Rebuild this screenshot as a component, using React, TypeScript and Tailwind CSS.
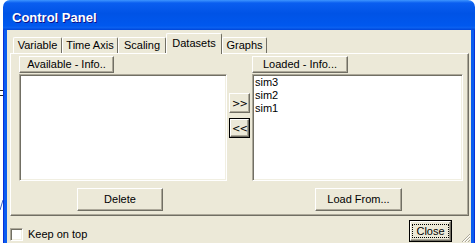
import clsx from "clsx";
import type { ReactNode } from "react";

const face = "bg-[#ece9d8]";
const raised =
  "border border-t-white border-l-white border-r-[#716f64] border-b-[#716f64] shadow-[inset_-1px_-1px_0_#aca899]";
const sunken =
  "border border-t-[#aca899] border-l-[#aca899] border-r-white border-b-white shadow-[inset_1px_1px_0_#716f64,inset_-1px_-1px_0_#f1efe2]";

const Btn = ({ children, className }: { children: ReactNode; className?: string }) => (
  <div className={clsx("flex items-center justify-center text-black", face, raised, className)}>
    {children}
  </div>
);

const tabs = [
  { name: "Variable", w: "w-[49px]" },
  { name: "Time Axis", w: "w-[56px]" },
  { name: "Scaling", w: "w-[48px]" },
  { name: "Datasets", w: "w-[56px]", active: true },
  { name: "Graphs", w: "w-[45px]" },
];

const loaded = ["sim3", "sim2", "sim1"];

const App = () => {
  return (
    <div className="w-[475px] h-[246px] bg-white flex overflow-hidden font-['Liberation_Sans',Arial,sans-serif] text-[11px] text-black">
      {/* bits of whatever is behind the window */}
      <svg width="3" height="246" className="shrink-0">
        <line x1="0" y1="90.5" x2="3" y2="90.5" stroke="#222" />
        <line x1="0" y1="95.5" x2="3" y2="95.5" stroke="#222" />
        <line x1="3" y1="200" x2="0" y2="210" stroke="#3a62c8" />
      </svg>

      <div className="w-[472px] h-[243px] flex flex-col rounded-t-[7px] overflow-hidden shrink-0">
        <div className="h-[30px] flex items-center pt-[5px] pl-[9px] bg-[linear-gradient(180deg,#3d95ff_0%,#0a5ef0_10%,#0053e6_45%,#0058ee_85%,#0a60f0_92%,#0045d8_100%)]">
          <span className="text-white font-bold text-[13px] [text-shadow:1px_1px_#0f1089]">Control Panel</span>
        </div>

        <div className="flex flex-1">
          <div className="w-px bg-[#0831d9]" />
          <div className="w-[3px] bg-[#0b5cef]" />

          <div className={clsx("relative flex-1 flex flex-col pl-[3px] pt-[3px]", face)}>
            {/* tab strip */}
            <div className="h-[20px] flex items-end pl-[3px]">
              {tabs.map((t) =>
                t.active ? (
                  <div
                    key={t.name}
                    className={clsx(
                      "h-[21px] -mb-px relative z-10 flex items-center justify-center pb-[2px] border-l border-t border-r border-l-white border-t-white border-r-[#716f64] rounded-t-[2px]",
                      face,
                      t.w
                    )}
                  >
                    {t.name}
                  </div>
                ) : (
                  <div
                    key={t.name}
                    className={clsx(
                      "h-[16px] flex items-center justify-center border-l border-t border-r border-l-white border-t-white border-r-[#716f64] rounded-t-[2px]",
                      t.w
                    )}
                  >
                    {t.name}
                  </div>
                )
              )}
            </div>

            {/* tab page */}
            <div className={clsx("w-[459px] h-[163px] flex gap-[2px] pl-[8px] pt-[2px]", raised)}>
              <div className="w-[208px] flex flex-col">
                <Btn className="w-[95px] h-[17px]">Available - Info..</Btn>
                <div className={clsx("mt-px h-[107px] bg-white", sunken)} />
                <Btn className="mt-[7px] ml-[58px] w-[86px] h-[23px]">Delete</Btn>
              </div>

              <div className="w-[21px] flex flex-col gap-[5px] pt-[37px]">
                <Btn className="h-[20px] font-['DejaVu_Sans',sans-serif] text-[10px] tracking-[-1px]">&gt;&gt;</Btn>
                <div className="border border-black">
                  <Btn className="h-[18px] font-['DejaVu_Sans',sans-serif] text-[10px] tracking-[-1px]">&lt;&lt;</Btn>
                </div>
              </div>

              <div className="w-[211px] flex flex-col">
                <Btn className="w-[96px] h-[17px]">Loaded - Info...</Btn>
                <div className={clsx("mt-px h-[107px] bg-white pl-[2px] pt-px", sunken)}>
                  {loaded.map((s) => (
                    <div key={s} className="leading-[13px]">
                      {s}
                    </div>
                  ))}
                </div>
                <Btn className="mt-[7px] ml-[63px] w-[87px] h-[23px]">Load From...</Btn>
              </div>
            </div>

            {/* bottom row */}
            <div className="flex-1 flex items-end">
              <div className="flex items-center gap-[5px] mb-[2px]">
                <div className={clsx("w-[13px] h-[13px] bg-white", sunken)} />
                <span className="leading-[13px]">Keep on top</span>
              </div>
              <div className="ml-auto mr-[19px] mb-px border border-black">
                <Btn className="w-[41px] h-[20px]">
                  <span className="border border-dotted border-black px-[3px] leading-[12px]">Close</span>
                </Btn>
              </div>
            </div>

            {/* size grip */}
            <svg width="11" height="11" className="absolute right-0 bottom-0">
              <line x1="10" y1="2" x2="2" y2="10" stroke="#aca899" />
              <line x1="10" y1="5" x2="5" y2="10" stroke="#aca899" />
              <line x1="10" y1="8" x2="8" y2="10" stroke="#aca899" />
              <line x1="10" y1="3" x2="3" y2="10" stroke="#fff" />
              <line x1="10" y1="6" x2="6" y2="10" stroke="#fff" />
            </svg>
          </div>

          <div className="w-[3px] bg-[#0b5cef]" />
          <div className="w-px bg-[#0831d9]" />
        </div>
      </div>
    </div>
  );
};

export default App;
